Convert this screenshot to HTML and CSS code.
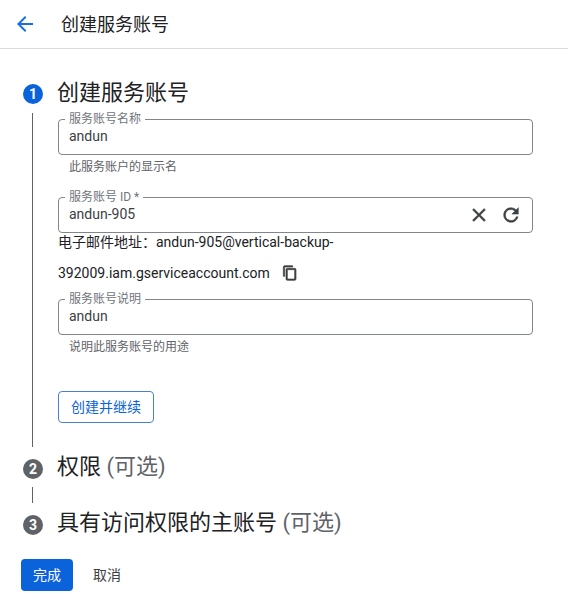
FILE: index.html
```html
<!DOCTYPE html>
<html lang="zh-CN">
<head>
<meta charset="utf-8">
<title>创建服务账号</title>
<link rel="stylesheet" href="styles.css">
</head>
<body>
<header class="topbar">
  <svg class="back" width="24" height="24" viewBox="0 0 24 24"><path fill="#1a6fe0" d="M20 11H7.830l5.590-5.590L12 4l-8 8 8 8 1.410-1.410L7.830 13H20z"/></svg>
  <h1 class="page-title">创建服务账号</h1>
</header>
<main class="stepper">
  <section class="step step-open">
    <div class="step-head">
      <span class="num num-active">1</span>
      <h2 class="step-title">创建服务账号</h2>
    </div>
    <div class="step-body">
      <div class="field">
        <span class="legend">服务账号名称</span>
        <span class="value">andun</span>
      </div>
      <p class="hint">此服务账户的显示名</p>
      <div class="field">
        <span class="legend">服务账号 ID *</span>
        <span class="value">andun-905</span>
        <span class="actions">
          <svg viewBox="0 0 24 24"><path fill="#3c4043" stroke="#3c4043" stroke-width=".6" d="M19 6.410 17.590 5 12 10.590 6.410 5 5 6.410 10.590 12 5 17.590 6.410 19 12 13.410 17.590 19 19 17.590 13.410 12z"/></svg>
          <svg viewBox="0 0 24 24"><path fill="#3c4043" stroke="#3c4043" stroke-width=".6" d="M17.650 6.350A7.960 7.960 0 0 0 12 4a8 8 0 1 0 7.730 10h-2.080A6 6 0 1 1 12 6c1.660 0 3.140.690 4.220 1.780L13 11h7V4z"/></svg>
        </span>
      </div>
      <p class="email">
        <span class="email-line">电子邮件地址：andun-905@vertical-backup-</span>
        <span class="email-line email-line-second">392009.iam.gserviceaccount.com<svg class="copy" width="16" height="16" viewBox="0 0 24 24"><path fill="#3c4043" stroke="#3c4043" d="M16 1H4c-1.100 0-2 .9-2 2v14h2V3h12zm3 4H8c-1.100 0-2 .9-2 2v14c0 1.100.9 2 2 2h11c1.100 0 2-.9 2-2V7c0-1.100-.9-2-2-2zm0 16H8V7h11z"/></svg></span>
      </p>
      <div class="field">
        <span class="legend">服务账号说明</span>
        <span class="value">andun</span>
      </div>
      <p class="hint">说明此服务账号的用途</p>
      <button class="btn btn-outline" type="button">创建并继续</button>
    </div>
  </section>
  <section class="step step-second">
    <div class="step-head">
      <span class="num">2</span>
      <h2 class="step-title step-title-raised">权限 <span class="optional">(可选)</span></h2>
    </div>
    <div class="step-link"></div>
  </section>
  <section class="step">
    <div class="step-head">
      <span class="num">3</span>
      <h2 class="step-title step-title-raised">具有访问权限的主账号 <span class="optional">(可选)</span></h2>
    </div>
  </section>
</main>
<footer class="footer">
  <button class="btn btn-primary" type="button">完成</button>
  <button class="btn btn-text" type="button">取消</button>
</footer>
</body>
</html>
```
FILE: styles.css
```css
* { box-sizing: border-box; }
html, body { margin: 0; padding: 0; }
body {
  width: 568px;
  height: 602px;
  overflow: hidden;
  background: #fff;
  color: #202124;
  font-family: Roboto, "Noto Sans CJK SC", sans-serif;
  font-size: 14px;
}
.topbar {
  display: flex;
  align-items: center;
  height: 49px;
  padding-left: 13px;
  border-bottom: 1px solid #dadce0;
}
.page-title {
  margin: 0 0 2px 24px;
  font-size: 18px;
  font-weight: 400;
}
.stepper { padding: 31px 0 0 23px; }
.step-head {
  display: flex;
  align-items: center;
  height: 26px;
  gap: 14px;
}
.num {
  flex: none;
  width: 20px;
  height: 20px;
  border-radius: 50%;
  background: #5f6368;
  color: #fff;
  font-size: 14px;
  font-weight: 700;
  line-height: 20px;
  text-align: center;
}
.num-active {
  margin-top: 2px;
  background: #0b63dc;
}
.step-title {
  margin: 0;
  font-size: 22px;
  font-weight: 400;
  line-height: 26px;
  white-space: nowrap;
}
.step-title-raised { margin-bottom: 4px; }
.optional { color: #5f6368; }
.step-body {
  margin: 7px 0 0 9px;
  padding: 6px 0 0 25px;
  width: 501px;
  height: 334px;
  border-left: 1px solid #5f6368;
}
.step-second { margin-top: 9px; }
.field {
  position: relative;
  display: flex;
  align-items: center;
  height: 36px;
  padding: 0 10px 0 10px;
  border: 1px solid #80868b;
  border-radius: 4px;
}
.legend {
  position: absolute;
  top: -8px;
  left: 6px;
  padding: 0 4px;
  background: #fff;
  color: #70757a;
  font-size: 12px;
  line-height: 14px;
}
.value {
  flex: 1;
  padding-bottom: 3px;
  color: #3c4043;
  font-size: 14px;
  line-height: 20px;
}
.actions {
  display: flex;
  gap: 10px;
}
.actions svg { width: 22px; height: 22px; display: block; }
.hint {
  margin: 3px 0 21px 11px;
  color: #5f6368;
  font-size: 12px;
  line-height: 18px;
}
.email {
  margin: 0 0 17px;
  color: #202124;
}
.email-line {
  display: block;
  line-height: 18px;
}
.email-line-second { margin-top: 13px; }
.copy { margin-left: 12px; vertical-align: -3px; }
.btn {
  height: 32px;
  padding: 0 0 2px;
  border-radius: 4px;
  font-family: inherit;
  font-size: 14px;
  cursor: pointer;
}
.btn-outline {
  display: block;
  width: 96px;
  margin-top: 35px;
  border: 1px solid #4a7fd0;
  background: #fff;
  color: #0b63dc;
}
.step-link {
  width: 1px;
  height: 16px;
  margin: 5px 0 9px 9px;
  background: #5f6368;
}
.footer {
  display: flex;
  gap: 4px;
  padding: 21px 0 0 21px;
}
.btn-primary {
  width: 52px;
  border: 0;
  background: #0b63dc;
  color: #fff;
}
.btn-text {
  width: 60px;
  border: 0;
  background: none;
  color: #3c4043;
}
```
